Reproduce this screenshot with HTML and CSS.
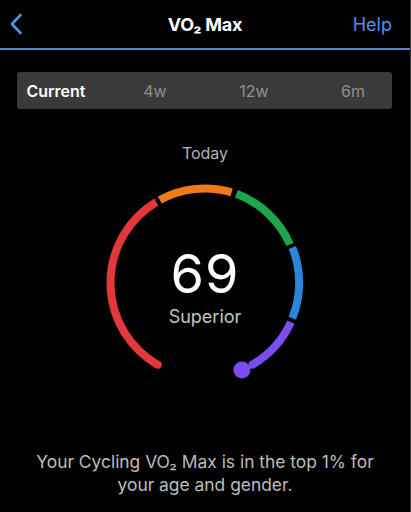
FILE: index.html
```html
<!DOCTYPE html>
<html lang="en">
  <head>
    <meta charset="UTF-8" />
    <meta name="viewport" content="width=device-width, initial-scale=1.0" />
    <title>VO₂ Max</title>
    <link rel="stylesheet" href="styles.css">
  </head>
  <body>
    <div class="screen">
      <header class="nav">
        <button class="back" aria-label="Back">
          <svg width="14" height="22" viewBox="0 0 14 22">
            <path d="M11.5 2 L3 11 L11.5 20" fill="none" stroke="#4f94e6" stroke-width="2.6" stroke-linecap="round" stroke-linejoin="round" />
          </svg>
        </button>
        <h1 class="title">VO₂ Max</h1>
        <a class="help" href="#">Help</a>
      </header>

      <div class="tabs">
        <span class="tab active">Current</span>
        <span class="tab">4w</span>
        <span class="tab">12w</span>
        <span class="tab">6m</span>
      </div>

      <p class="day">Today</p>

      <div class="gauge">
        <svg width="210" height="210" viewBox="0 0 210 210">
          <g fill="none" stroke-width="8">
            <path d="M57.75 186.84 A94.5 94.5 0 0 1 56.33 24.00" stroke="#e1383c" />
            <path d="M59.80 22.00 A94.5 94.5 0 0 1 131.60 14.32" stroke="#ee7a1c" />
            <path d="M136.40 15.85 A94.5 94.5 0 0 1 190.00 66.50" stroke="#1fa64c" />
            <path d="M192.30 69.40 A94.5 94.5 0 0 1 192.30 140.20" stroke="#2a86dc" />
            <path d="M190.90 144.20 A94.5 94.5 0 0 1 152.25 186.84" stroke="#7b4cf0" />
          </g>
          <circle cx="57.75" cy="186.84" r="4" fill="#e1383c" />
          <circle cx="152.25" cy="186.84" r="4" fill="#7b4cf0" />
          <circle cx="141.9" cy="192" r="8.5" fill="#7b4cf0" />
        </svg>
        <div class="readout">
          <div class="score">69</div>
          <div class="rating">Superior</div>
        </div>
      </div>

      <p class="summary">Your Cycling VO₂ Max is in the top 1% for<br>your age and gender.</p>
    </div>
  </body>
</html>
```

FILE: styles.css
```css
body {
  margin: 0;
  background-color: #000;
  font-family: Inter, "Noto Sans", sans-serif;
  color: #fff;
}
.screen {
  height: 512px;
  overflow: hidden;
  border-right: 1px solid #3a3a3a;
}
.nav {
  display: grid;
  grid-template-columns: 1fr auto 1fr;
  align-items: center;
  height: 48px;
  padding: 0 18px;
  border-bottom: 2px solid #5a82c2;
}
.back {
  justify-self: start;
  display: flex;
  margin-left: -9px;
  padding: 0;
  border: 0;
  background: none;
}
.title {
  margin: 0;
  font-size: 18px;
  font-weight: 700;
  letter-spacing: -0.2px;
}
.help {
  justify-self: end;
  color: #4f90e2;
  font-size: 18px;
  text-decoration: none;
}
.tabs {
  display: grid;
  grid-template-columns: repeat(4, 99px);
  justify-content: center;
  align-items: center;
  height: 37px;
  margin: 22px 18px 0 17px;
  border-radius: 3px;
  background-color: #3a3a3a;
}
.tab {
  text-align: center;
  font-size: 16px;
  color: #8f8f8f;
}
.tab.active {
  color: #fff;
  font-weight: 600;
}
.day {
  margin: 34px 0 0;
  text-align: center;
  font-size: 16px;
  line-height: 20px;
  color: #b4b4b4;
}
.gauge {
  position: relative;
  width: 210px;
  height: 210px;
  margin: 15px auto 0;
}
.gauge svg {
  display: block;
}
.readout {
  position: absolute;
  top: 66px;
  left: 0;
  right: 0;
  text-align: center;
}
.score {
  font-size: 54px;
  line-height: 60px;
  font-weight: 400;
  letter-spacing: 1px;
}
.rating {
  margin-top: 1px;
  font-size: 18px;
  line-height: 24px;
  color: #c4c4c4;
}
.summary {
  margin: 62px 0 0;
  text-align: center;
  font-size: 17.4px;
  line-height: 23px;
  color: #bcbcbc;
}
```
